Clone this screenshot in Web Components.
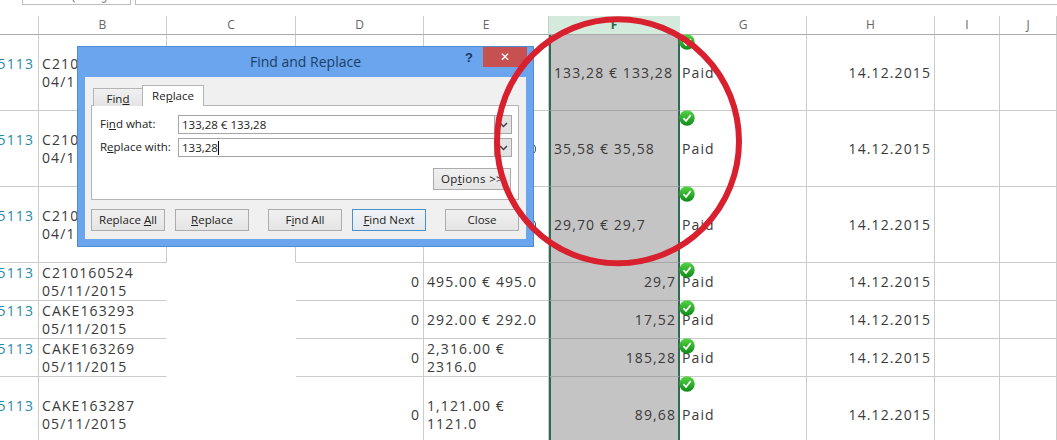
<!DOCTYPE html>
<html><head><meta charset="utf-8"><title>Find and Replace</title>
<style>
html,body{margin:0;padding:0;background:#fff;overflow:hidden;height:440px;}
body{font-family:"Open Sans","Liberation Sans",sans-serif;color:#333;}
</style></head><body>
<sheet-app>
  <formula-bar slot="top"></formula-bar>
  <sheet-grid>
    <sheet-cell head></sheet-cell><sheet-cell head>B</sheet-cell><sheet-cell head>C</sheet-cell><sheet-cell head>D</sheet-cell><sheet-cell head>E</sheet-cell><sheet-cell head sel>F</sheet-cell><sheet-cell head>G</sheet-cell><sheet-cell head>H</sheet-cell><sheet-cell head>I</sheet-cell><sheet-cell head>J</sheet-cell>

    <sheet-cell link>5113</sheet-cell><sheet-cell>C210<br>04/1</sheet-cell><sheet-cell></sheet-cell><sheet-cell></sheet-cell><sheet-cell></sheet-cell><sheet-cell col>133,28 € 133,28</sheet-cell><sheet-cell status><paid-check></paid-check>Paid</sheet-cell><sheet-cell right>14.12.2015</sheet-cell><sheet-cell></sheet-cell><sheet-cell></sheet-cell>

    <sheet-cell link>5113</sheet-cell><sheet-cell>C210<br>04/1</sheet-cell><sheet-cell></sheet-cell><sheet-cell></sheet-cell><sheet-cell right><edge-arc></edge-arc></sheet-cell><sheet-cell col>35,58 € 35,58</sheet-cell><sheet-cell status><paid-check></paid-check>Paid</sheet-cell><sheet-cell right>14.12.2015</sheet-cell><sheet-cell></sheet-cell><sheet-cell></sheet-cell>

    <sheet-cell link>5113</sheet-cell><sheet-cell>C210<br>04/1</sheet-cell><sheet-cell nb></sheet-cell><sheet-cell></sheet-cell><sheet-cell right><edge-arc></edge-arc></sheet-cell><sheet-cell col>29,70 € 29,7</sheet-cell><sheet-cell status><paid-check></paid-check>Paid</sheet-cell><sheet-cell right>14.12.2015</sheet-cell><sheet-cell></sheet-cell><sheet-cell></sheet-cell>

    <sheet-cell link>5113</sheet-cell><sheet-cell nr>C210160524<br>05/11/2015</sheet-cell><sheet-cell nr nb></sheet-cell><sheet-cell right>0</sheet-cell><sheet-cell>495.00 € 495.0</sheet-cell><sheet-cell col right>29,7</sheet-cell><sheet-cell status><paid-check></paid-check>Paid</sheet-cell><sheet-cell right>14.12.2015</sheet-cell><sheet-cell></sheet-cell><sheet-cell></sheet-cell>

    <sheet-cell link>5113</sheet-cell><sheet-cell nr>CAKE163293<br>05/11/2015</sheet-cell><sheet-cell nr nb></sheet-cell><sheet-cell right>0</sheet-cell><sheet-cell>292.00 € 292.0</sheet-cell><sheet-cell col right>17,52</sheet-cell><sheet-cell status><paid-check></paid-check>Paid</sheet-cell><sheet-cell right>14.12.2015</sheet-cell><sheet-cell></sheet-cell><sheet-cell></sheet-cell>

    <sheet-cell link>5113</sheet-cell><sheet-cell nr>CAKE163269<br>05/11/2015</sheet-cell><sheet-cell nr nb></sheet-cell><sheet-cell right>0</sheet-cell><sheet-cell>2,316.00 €<br>2316.0</sheet-cell><sheet-cell col right>185,28</sheet-cell><sheet-cell status><paid-check></paid-check>Paid</sheet-cell><sheet-cell right>14.12.2015</sheet-cell><sheet-cell></sheet-cell><sheet-cell></sheet-cell>

    <sheet-cell link>5113</sheet-cell><sheet-cell nr>CAKE163287<br>05/11/2015</sheet-cell><sheet-cell nr nb></sheet-cell><sheet-cell right>0</sheet-cell><sheet-cell>1,121.00 €<br>1121.0</sheet-cell><sheet-cell col right>89,68</sheet-cell><sheet-cell status><paid-check></paid-check>Paid</sheet-cell><sheet-cell right>14.12.2015</sheet-cell><sheet-cell></sheet-cell><sheet-cell></sheet-cell>
  </sheet-grid>
  <find-dialog slot="over">
    <tab-strip slot="tabs"></tab-strip>
    <dlg-field slot="fields" label="Fi<u>n</u>d what:" value="133,28 € 133,28"></dlg-field>
    <dlg-field slot="fields" label="R<u>e</u>place with:" value="133,28" caret></dlg-field>
    <dlg-button slot="options" wide>Op<u>t</u>ions &gt;&gt;</dlg-button>
    <dlg-button slot="actions">Replace <u>A</u>ll</dlg-button>
    <dlg-button slot="actions"><u>R</u>eplace</dlg-button>
    <dlg-button slot="actions" far>F<u>i</u>nd All</dlg-button>
    <dlg-button slot="actions" primary><u>F</u>ind Next</dlg-button>
    <dlg-button slot="actions" far>Close</dlg-button>
  </find-dialog>
  <red-ring slot="over"></red-ring>
</sheet-app>
<script>
function def(name, css, html, extra){
  customElements.define(name, class extends HTMLElement{
    constructor(){super();this.attachShadow({mode:"open"}).innerHTML="<style>"+css+"</style>"+(typeof html==="function"?html(this):html);}
    connectedCallback(){ if(extra) extra(this); }
  });
}
def("sheet-app",
 ":host{display:block;position:relative;width:1057px;height:440px;overflow:hidden;background:#fff}",
 "<slot name='top'></slot><slot></slot><slot name='over'></slot>");
def("formula-bar",
 ":host{display:flex;gap:4px;height:5px;margin:0 0 11px 22px}div{box-sizing:border-box;height:5px;border:1px solid #bdbdbd;border-top:0}.n{width:109px;overflow:hidden}.f{flex:1;border-right:0}svg{display:block}",
 `<div class='n'><svg width="107" height="4" viewBox="0 0 107 4"><path d="M50 0l1.5 2.5M83 0c0 3-3 3-4 1.5" fill="none" stroke="#8a8a8a" stroke-width="1.2"/></svg></div><div class='f'></div>`);
def("sheet-grid",
 ":host{display:grid;grid-template-columns:39px 128px 129px 128px 125px 131px 127px 128px 65px 57px;grid-template-rows:19px 76px 76px 76px 38px 38px 38px 76px;}",
 "<slot></slot>");
def("sheet-cell",
 `:host{box-sizing:border-box;display:flex;align-items:center;position:relative;min-width:0;
   border-right:1px solid #cbcbcb;border-bottom:1px solid #cbcbcb;padding:0 3px;
   font:14px/18px "Open Sans","Liberation Sans",sans-serif;letter-spacing:1.1px;color:#3a3a3a;white-space:nowrap}
  :host([head]){justify-content:center;font-size:12px;letter-spacing:0;color:#666;border-bottom-color:#a9a9a9;line-height:16px}
  :host([head][sel]){background:#d3eadd;color:#1f6b47;font-weight:700;border-right-color:#d3eadd}
  :host([nb]){border-bottom-color:transparent}
  :host([nr]){border-right-color:transparent}
  :host([right]){justify-content:flex-end;padding-right:3px}
  :host([link]){justify-content:flex-end;color:#2b8aa6;padding:0 4px 18px 0}
  :host([col]){background:#c4c4c4;border-left:2px solid #2e6b55;border-right:2px solid #2e6b55;border-bottom-color:#a6a6a6;padding:0 3px}
  :host([col][right]){padding-right:2px}
  :host([status]){padding-left:2px}`,
 "<slot></slot>");
def("edge-arc",
 ":host{display:block;box-sizing:border-box;width:7px;height:10px;margin-right:9px;border:1.5px solid #2f4560;border-radius:50%}",
 "");
def("paid-check",
 ":host{position:absolute;left:-1px;top:-1px;width:16px;height:16px;display:block}svg{display:block}",
 `<svg width="16" height="16" viewBox="0 0 16 16"><defs><linearGradient id="g" x1="0" y1="0" x2="0" y2="1"><stop offset="0" stop-color="#56d544"/><stop offset="1" stop-color="#0e8a1a"/></linearGradient></defs><circle cx="8" cy="8" r="7.7" fill="url(#g)"/><path d="M4.4 8.2 7 10.9l4.7-6" fill="none" stroke="#fff" stroke-width="1.7"/></svg>`);
def("find-dialog",
 `:host{position:absolute;left:77px;top:46px;width:457px;height:201px;box-sizing:border-box;background:#6aa5ee;border:1px solid #4f8bd6;padding:0 7px 7px;display:flex;flex-direction:column;font:11.5px/16px "Open Sans","Liberation Sans",sans-serif;color:#222}
  .bar{height:30px;display:grid;grid-template-columns:1fr auto 1fr;margin:0 -7px;flex:none}
  .t{grid-column:2;font-size:14px;line-height:30px;color:#1b3f66}
  .r{grid-column:3;display:flex;justify-content:flex-end;align-items:flex-start;padding-right:6px}
  .q{font:700 13px/20px "Liberation Sans",sans-serif;color:#17375e;margin:1px 10px 0 0}
  .x{width:44px;height:20px;background:#c75050;color:#fff;text-align:center;font:700 12px/20px "Liberation Sans","DejaVu Sans",sans-serif}
  .in{flex:1;background:#f0f0f0;padding:8px 7px 0 6px;display:flex;flex-direction:column}
  .panel{height:95px;box-sizing:border-box;background:#fff;border:1px solid #b4b4b4;padding:9px 6px 0 8px;display:flex;flex-direction:column;gap:4px;flex:none}
  .opt{display:flex;justify-content:flex-end;margin:7px 1px 0 0}
  .act{display:flex;margin-top:9px}`,
 `<div class="bar"><div class="t">Find and Replace</div><div class="r"><div class="q">?</div><div class="x">✕</div></div></div>
  <div class="in"><slot name="tabs"></slot><div class="panel"><slot name="fields"></slot><div class="opt"><slot name="options"></slot></div></div><div class="act"><slot name="actions"></slot></div></div>`);
def("tab-strip",
 `:host{display:flex;align-items:flex-end;height:21px;padding-left:2px;position:relative;z-index:1;margin-bottom:-1px}
  div{box-sizing:border-box;text-align:center;border:1px solid #b4b4b4;border-bottom:0}
  .a{width:50px;height:18px;background:linear-gradient(#f0f0f0,#e4e4e4);line-height:19px}
  .b{width:62px;height:21px;background:#fff;line-height:20px;margin-left:-1px}`,
 `<div class="a">Fin<u>d</u></div><div class="b">Re<u>p</u>lace</div>`);
def("dlg-field",
 `:host{display:flex;height:19px;align-items:stretch}
  label{width:78px;line-height:18px;flex:none}
  .i{flex:1;box-sizing:border-box;border:1px solid #a6a6a6;border-right:0;background:#fff;padding-left:3px;line-height:18px}
  .c{display:inline-block;width:1px;height:14px;background:#000;vertical-align:-3px}
  .d{width:18px;box-sizing:border-box;border:1px solid #a6a6a6;background:#e3e3e3;display:flex;align-items:center;justify-content:center}`,
 el=>`<label>${el.getAttribute("label")}</label><div class="i">${el.getAttribute("value")}${el.hasAttribute("caret")?'<span class="c"></span>':''}</div><div class="d"><svg width="9" height="6" viewBox="0 0 9 6"><path d="M1 1l3.5 3.5L8 1" fill="none" stroke="#444" stroke-width="1.5"/></svg></div>`);
def("dlg-button",
 `:host{box-sizing:border-box;display:block;width:74px;height:22px;flex:none;text-align:center;line-height:20px;border:1px solid #acacac;background:linear-gradient(#f0f0f0,#e5e5e5);margin-right:10px;white-space:nowrap}
  :host([wide]){width:78px;margin-right:0;letter-spacing:.35px}
  :host([primary]){border-color:#4a90c8;background:linear-gradient(#f0f4f8,#e5e8ec)}
  :host([far]){margin-left:9px}`,
 "<slot></slot>");
def("red-ring",
 ":host{position:absolute;left:490px;top:12px;width:256px;height:260px;display:block;pointer-events:none}svg{display:block}",
 `<svg width="256" height="260" viewBox="0 0 256 260"><ellipse cx="128" cy="129.3" rx="121" ry="122" fill="none" stroke="#d8202f" stroke-width="6"/></svg>`);
</script>
</body></html>
